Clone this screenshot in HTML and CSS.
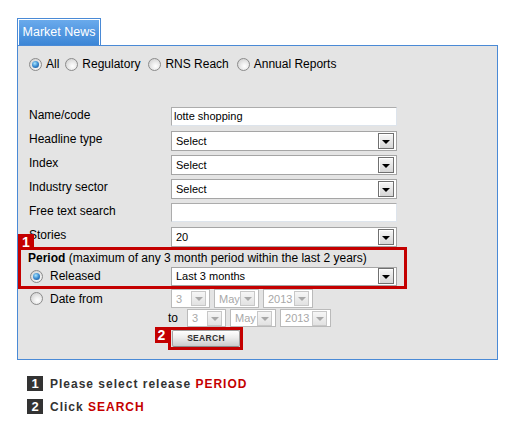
FILE: index.html
```html
<!DOCTYPE html>
<html>
<head>
<meta charset="utf-8">
<link rel="stylesheet" href="styles.css">
</head>
<body>
<div class="page">
  <div class="tab"><div class="tab-in">Market News</div></div>
  <div class="panel">
    <div class="scope">
      <span class="opt first"><span class="radio on"></span>All</span>
      <span class="opt"><span class="radio"></span>Regulatory</span>
      <span class="opt"><span class="radio"></span>RNS Reach</span>
      <span class="opt"><span class="radio"></span>Annual Reports</span>
    </div>
    <div class="form">
      <div class="row"><span class="lbl">Name/code</span><div class="text">lotte shopping</div></div>
      <div class="row"><span class="lbl">Headline type</span><div class="select"><span class="val">Select</span><span class="btn"></span></div></div>
      <div class="row"><span class="lbl">Index</span><div class="select"><span class="val">Select</span><span class="btn"></span></div></div>
      <div class="row"><span class="lbl">Industry sector</span><div class="select"><span class="val">Select</span><span class="btn"></span></div></div>
      <div class="row"><span class="lbl">Free text search</span><div class="text"></div></div>
      <div class="row"><span class="lbl">Stories</span><div class="select"><span class="val">20</span><span class="btn"></span></div></div>
    </div>
    <div class="period">
      <span class="badge b1">1</span>
      <div class="ptitle"><b>Period</b> (maximum of any 3 month period within the last 2 years)</div>
      <div class="prow">
        <span class="pcol"><span class="radio on"></span>Released</span>
        <div class="select sel19"><span class="val">Last 3 months</span><span class="btn"></span></div>
      </div>
    </div>
    <div class="drow1">
      <span class="dcol"><span class="radio"></span>Date from</span>
      <div class="dsel w39"><span class="val">3</span><span class="dbtn"></span></div>
      <div class="dsel w45"><span class="val">May</span><span class="dbtn"></span></div>
      <div class="dsel w50"><span class="val">2013</span><span class="dbtn"></span></div>
    </div>
    <div class="drow2">
      <span class="to">to</span>
      <div class="dsel w39"><span class="val">3</span><span class="dbtn"></span></div>
      <div class="dsel w46"><span class="val">May</span><span class="dbtn"></span></div>
      <div class="dsel w51"><span class="val">2013</span><span class="dbtn"></span></div>
    </div>
    <div class="srow">
      <div class="sbox">
        <span class="badge b2">2</span>
        <div class="sbtn">SEARCH</div>
      </div>
    </div>
  </div>
  <div class="legend">
    <div class="lrow"><span class="num">1</span><span class="ltext">Please select release <em>PERIOD</em></span></div>
    <div class="lrow"><span class="num">2</span><span class="ltext">Click <em>SEARCH</em></span></div>
  </div>
</div>
</body>
</html>
```
FILE: styles.css
```css
body {
  margin: 0;
  background: #fff;
  color: #000;
  font-family: "Liberation Sans", Arial, sans-serif;
  font-size: 12px;
}
.page {
  padding: 18px 0 0 17px;
}
.tab {
  width: 84px;
  height: 27px;
  box-sizing: border-box;
  border: 1px solid #4a8ad6;
  border-bottom: 0;
  padding: 1px 1px 0;
  background: #fff;
}
.tab-in {
  height: 25px;
  line-height: 25px;
  background: linear-gradient(#6aaaec, #3c86d6);
  color: #fff;
  font-size: 12.5px;
  text-align: center;
}
.panel {
  width: 481px;
  height: 315px;
  box-sizing: border-box;
  border: 1px solid #4a8ad6;
  background: #e4e4e4;
  padding-top: 11px;
}
.scope {
  display: flex;
  align-items: center;
  height: 14px;
  line-height: 14px;
  padding-left: 11px;
  gap: 8px;
}
.opt {
  display: flex;
  align-items: center;
}
.opt.first {
  margin-right: -2px;
}
.opt .radio {
  margin-right: 4px;
}
.radio {
  display: inline-block;
  position: relative;
  width: 13px;
  height: 13px;
  box-sizing: border-box;
  border-radius: 50%;
  border: 1px solid #8b8b8b;
  background: radial-gradient(circle at 60% 65%, #ffffff 0%, #eeeeee 35%, #c8c8c8 100%);
  flex: none;
}
.radio.on::after {
  content: "";
  position: absolute;
  left: 2px;
  top: 2px;
  width: 7px;
  height: 7px;
  border-radius: 50%;
  background: radial-gradient(circle at 40% 35%, #a8e6ff 0%, #3a8ad0 50%, #164a86 100%);
}
.form {
  margin-top: 36px;
  padding-left: 11px;
  display: flex;
  flex-direction: column;
  gap: 4px;
}
.row {
  display: flex;
  align-items: flex-start;
  height: 20px;
}
.lbl {
  width: 142px;
  line-height: 14px;
  padding-top: 1px;
}
.text {
  width: 226px;
  height: 19px;
  box-sizing: border-box;
  border: 1px solid;
  border-color: #acacac #dde4ec #dde4ec #acacac;
  background: #fff;
  font-size: 11px;
  line-height: 17px;
  padding-left: 2px;
}
.select {
  width: 226px;
  height: 20px;
  box-sizing: border-box;
  border: 1px solid #a5a5a5;
  background: #fff;
  display: flex;
  align-items: center;
  font-size: 11px;
}
.select.sel19 {
  height: 19px;
}
.val {
  padding-left: 4px;
  flex: 1;
}
.btn {
  width: 16px;
  height: 16px;
  box-sizing: border-box;
  margin-right: 2px;
  border: 1px solid #707070;
  box-shadow: inset 1px 1px #ffffff;
  background: linear-gradient(#f7f7f7, #d6d6d6);
  display: flex;
  align-items: center;
  justify-content: center;
  flex: none;
}
.btn::after {
  content: "";
  width: 0;
  height: 0;
  margin-top: 1px;
  border-left: 4px solid transparent;
  border-right: 4px solid transparent;
  border-top: 4px solid #000;
}
.period {
  position: relative;
  width: 389px;
  height: 42px;
  box-sizing: border-box;
  border: 3px solid #c40000;
}
.badge {
  position: absolute;
  background: #c40000;
  color: #fff;
  font-weight: bold;
  font-size: 14px;
  display: flex;
  align-items: center;
  justify-content: center;
}
.b1 {
  left: -3px;
  top: -16px;
  width: 16px;
  height: 16px;
}
.ptitle {
  padding: 1px 0 0 7px;
  line-height: 14px;
  height: 15px;
}
.prow {
  display: flex;
  align-items: center;
  height: 20px;
}
.pcol {
  width: 150px;
  box-sizing: border-box;
  padding-left: 9px;
  display: flex;
  align-items: center;
}
.pcol .radio, .dcol .radio {
  margin-right: 7px;
}
.drow1 {
  display: flex;
  align-items: center;
  height: 19px;
  gap: 4px;
}
.dcol {
  width: 153px;
  box-sizing: border-box;
  padding-left: 12px;
  margin-right: -4px;
  display: flex;
  align-items: center;
}
.drow2 {
  display: flex;
  align-items: center;
  height: 18px;
  margin-top: 1px;
  padding-left: 150px;
  gap: 4px;
}
.to {
  margin-right: 5px;
}
.dsel {
  height: 100%;
  box-sizing: border-box;
  border: 1px solid #bababa;
  background: #fff;
  color: #a8a8a8;
  font-size: 11px;
  display: flex;
  align-items: center;
}
.w39 { width: 39px; }
.w45 { width: 45px; }
.w46 { width: 46px; }
.w50 { width: 50px; }
.w51 { width: 51px; }
.dbtn {
  width: 15px;
  height: 15px;
  box-sizing: border-box;
  margin-right: 3px;
  border: 1px solid #c8c8c8;
  background: linear-gradient(#f6f6f6, #e2e2e2);
  display: flex;
  align-items: center;
  justify-content: center;
  flex: none;
}
.dbtn::after {
  content: "";
  width: 0;
  height: 0;
  margin-top: 1px;
  border-left: 4px solid transparent;
  border-right: 4px solid transparent;
  border-top: 4px solid #a8a8a8;
}
.srow {
  padding-left: 150px;
}
.sbox {
  position: relative;
  width: 75px;
  height: 23px;
  box-sizing: border-box;
  border: 3px solid #c40000;
  padding: 0 0 0 1px;
}
.b2 {
  left: -16px;
  top: -3px;
  width: 13px;
  height: 16px;
}
.sbtn {
  height: 17px;
  box-sizing: border-box;
  border: 1px solid #a2a2a2;
  border-bottom-color: #8a8a8a;
  border-radius: 2px;
  background: linear-gradient(#ffffff, #ececec 45%, #cbcbcb);
  color: #333;
  font-size: 8.5px;
  font-weight: bold;
  letter-spacing: 0.3px;
  text-align: center;
  line-height: 15px;
}
.legend {
  margin: 16px 0 0 10px;
  display: flex;
  flex-direction: column;
  gap: 8px;
}
.lrow {
  display: flex;
  align-items: center;
  gap: 7px;
  height: 15px;
}
.num {
  width: 16px;
  height: 15px;
  background: #333;
  color: #fff;
  font-weight: bold;
  font-size: 13px;
  display: flex;
  align-items: center;
  justify-content: center;
}
.ltext {
  color: #333;
  font-weight: bold;
  letter-spacing: 1px;
}
.ltext em {
  font-style: normal;
  color: #c40000;
}
```
